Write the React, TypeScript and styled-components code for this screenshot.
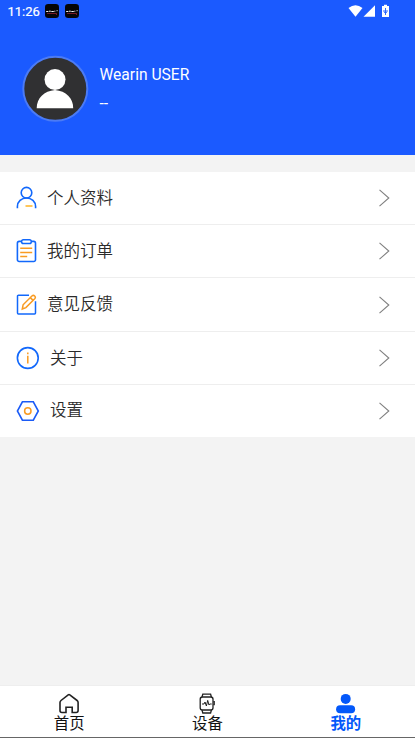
import React from 'react';
import styled, { createGlobalStyle } from 'styled-components';

const GlobalStyle = createGlobalStyle`
  * { box-sizing: border-box; }
  body { margin: 0; background: #f3f3f3; }
`;

const Screen = styled.div`
  display: flex;
  flex-direction: column;
  height: 738px;
  width: 100%;
  overflow: hidden;
  background: #f3f3f3;
  font-family: Roboto, 'Noto Sans CJK SC', sans-serif;
`;

const Header = styled.header`
  height: 155px;
  flex: none;
  background: #1b5aff;
  color: #fff;
`;

const StatusBar = styled.div`
  display: flex;
  align-items: center;
  height: 22px;
  padding: 0 24px 0 7.5px;
`;

const Clock = styled.span`
  width: 37.5px;
  font-size: 13px;
  font-weight: 400;
  line-height: 22px;
  padding-top: 1px;
  -webkit-text-stroke: 0.2px #fff;
`;

const AppBadge = styled.svg`
  width: 14px;
  height: 14px;
  margin-right: 6px;
`;

const StatusIcons = styled.svg`
  width: 43px;
  height: 14px;
  margin-left: auto;
`;

const Profile = styled.div`
  display: flex;
  padding: 33px 0 0 22px;
`;

const Avatar = styled.svg`
  width: 67px;
  height: 67px;
`;

const Identity = styled.div`
  display: flex;
  flex-direction: column;
  padding: 9px 0 0 10.5px;
  font-size: 15.6px;
  line-height: 22px;
`;

const Signature = styled.span`
  margin-top: 7px;
`;

const Menu = styled.main`
  display: grid;
  grid-template-rows: 53px 53px 54px 53px 52px;
  margin-top: 17px;
  background: #fff;
`;

const MenuRow = styled.div`
  display: flex;
  align-items: center;
  padding: 0 25px 0 15.5px;
  border-bottom: 1px solid #eee;

  &:last-child {
    border-bottom-color: #fff;
  }
`;

const MenuIcon = styled.svg<{ $wide?: boolean }>`
  width: ${(p) => (p.$wide ? 24 : 21)}px;
  height: 24px;
  margin-right: 10.5px;
  fill: none;
  stroke: #1268fb;
  stroke-width: 1.6;
`;

const Label = styled.span`
  font-size: 16.5px;
  font-weight: 350;
  line-height: 24px;
  padding-top: 1px;
  color: #2b2b2b;
`;

const Chevron = styled.svg`
  width: 11px;
  height: 18px;
  margin-left: auto;
  fill: none;
  stroke: #808080;
  stroke-width: 1.1;
`;

const TabBar = styled.nav`
  display: grid;
  grid-template-columns: repeat(3, 1fr);
  height: 53px;
  margin-top: auto;
  background: #fff;
  border-top: 1px solid #eee;
  border-bottom: 1px solid #666;
`;

const Tab = styled.div<{ $active?: boolean }>`
  display: flex;
  flex-direction: column;
  align-items: center;
  padding-top: 7px;
  font-size: 15.4px;
  line-height: 20px;
  font-weight: ${(p) => (p.$active ? 700 : 400)};
  color: ${(p) => (p.$active ? '#0358fa' : '#111')};
`;

const TabIcon = styled.svg`
  width: 22px;
  height: 21px;
  flex: none;
  fill: none;
  stroke: #222;
`;

const orange = '#f99b22';

const items = [
  {
    label: '个人资料',
    art: (
      <>
        <circle cx="10.5" cy="6.7" r="5.3" />
        <path d="M1.4 22.2v-1.6c0-5 4-8.6 9.1-8.6s9.1 3.6 9.1 8.6v1.6" />
        <path d="M9.5 20h7" stroke="#ffa800" strokeWidth="1.3" />
      </>
    ),
  },
  {
    label: '我的订单',
    art: (
      <>
        <path d="M5.4 2.4H3.2a1.8 1.8 0 0 0-1.8 1.8v16.5a1.8 1.8 0 0 0 1.8 1.8h14.5a1.8 1.8 0 0 0 1.8-1.8V4.2a1.8 1.8 0 0 0-1.8-1.8h-2.3" />
        <rect x="5.6" y=".8" width="9.7" height="3.7" rx="1.8" strokeWidth="1.5" />
        <path d="M4.2 9.2h12M4.2 13.4h12M4.2 17.6h7" stroke={orange} strokeWidth="1.5" />
      </>
    ),
  },
  {
    label: '意见反馈',
    art: (
      <>
        <path d="M13 2.3H2.4a.9.9 0 0 0-.9.9v16.9c0 .5.4.9.9.9h16.2c.5 0 .9-.4.9-.9V8.2" strokeWidth="1.5" />
        <path d="m6.3 16 .8-4.2L15.9 3q1.5-1.3 2.8 0t0 2.8l-8.8 8.8-3.6 1.4ZM14.3 4.6l2.8 2.8" stroke={orange} strokeWidth="1.5" />
      </>
    ),
  },
  {
    label: '关于',
    wide: true,
    art: (
      <>
        <circle cx="11.8" cy="12" r="10.4" />
        <path d="M11.8 9.8v7.6M11.8 6.5v1.8" stroke={orange} strokeWidth="1.5" />
      </>
    ),
  },
  {
    label: '设置',
    wide: true,
    art: (
      <>
        <path d="M6.4 2.8h10.9l5 9.2-5 9.2H6.4L1.4 12Z" stroke="#1b5bf6" />
        <circle cx="11.8" cy="12" r="3.2" stroke={orange} strokeWidth="1.5" />
      </>
    ),
  },
];

const LauncherBadge = () => (
  <AppBadge viewBox="0 0 14 14">
    <rect width="14" height="14" rx="3.2" fill="#050507" />
    <path d="M1.2 7.5h2.2M4 7.2h1.8M6.3 7.5h2.5M9.3 7.2h1M11.6 6.7h1" stroke="#eee" strokeWidth="1" />
    <path d="M2 9.5h9.5V11" stroke="#a32532" strokeWidth=".7" fill="none" />
  </AppBadge>
);

export default function App() {
  return (
    <Screen>
      <GlobalStyle />
      <Header>
        <StatusBar>
          <Clock>11:26</Clock>
          <LauncherBadge />
          <LauncherBadge />
          <StatusIcons viewBox="0 0 43 14" fill="#fff">
            <path d="M.5 3.9Q7.5-1.3 14.5 3.9L7.5 12.8Z" />
            <path d="M27 1.3V12.8H15.5Z" />
            <path d="M34 2H36V.8h3V2h2v11h-7Z" />
            <path d="M37.5 4v7M36 6v2l1.5 1 1.5-1V6" stroke="#1b5aff" strokeWidth=".9" fill="none" />
          </StatusIcons>
        </StatusBar>
        <Profile>
          <Avatar viewBox="0 0 67 67">
            <circle cx="33.3" cy="33.8" r="32" fill="#303032" stroke="#4b7bf5" strokeWidth="2" />
            <circle cx="33" cy="24.6" r="10.5" fill="#fff" />
            <path d="M14.7 53.2C14.7 43 22 36 33 35c11 1 18.2 8 18.2 18.2Z" fill="#fff" />
          </Avatar>
          <Identity>
            <span>Wearin USER</span>
            <Signature>--</Signature>
          </Identity>
        </Profile>
      </Header>
      <Menu>
        {items.map(({ label, wide, art }) => (
          <MenuRow key={label}>
            <MenuIcon $wide={wide} viewBox={wide ? '0 0 24 24' : '0 0 21 24'}>{art}</MenuIcon>
            <Label>{label}</Label>
            <Chevron viewBox="0 0 11 18"><path d="m.5.8 9.3 8.2-9.3 8.2" /></Chevron>
          </MenuRow>
        ))}
      </Menu>
      <TabBar>
        <Tab>
          <TabIcon viewBox="0 0 22 21">
            <path d="M10.2 1.8q.8-.6 1.6 0l7.3 5.7q1 .8 1 2v8q0 2-2 2h-3.9v-5.3H8v5.3H4q-2 0-2-2v-8q0-1.2 1-2Z" strokeWidth="1.6" />
          </TabIcon>
          首页
        </Tab>
        <Tab>
          <TabIcon viewBox="0 0 22 21" strokeWidth="1.3">
            <path d="m6 4 .8-2.8h7.8l.8 2.8M6 17l.8 3h7.8l.8-3M17.3 8.7h.9v3h-.9" />
            <rect x="4.2" y="4" width="12.8" height="13" rx="2.2" />
            <path d="M6 11h2l1-2 1.4 4L11.7 7.4 13 12l.7-1h2" strokeWidth="1" />
          </TabIcon>
          设备
        </Tab>
        <Tab $active>
          <TabIcon viewBox="0 0 22 21">
            <g fill="#0358fa" stroke="none">
              <circle cx="10.7" cy="5.9" r="5" />
              <rect x="1.1" y="12.2" width="19" height="8" rx="4" />
            </g>
          </TabIcon>
          我的
        </Tab>
      </TabBar>
    </Screen>
  );
}
